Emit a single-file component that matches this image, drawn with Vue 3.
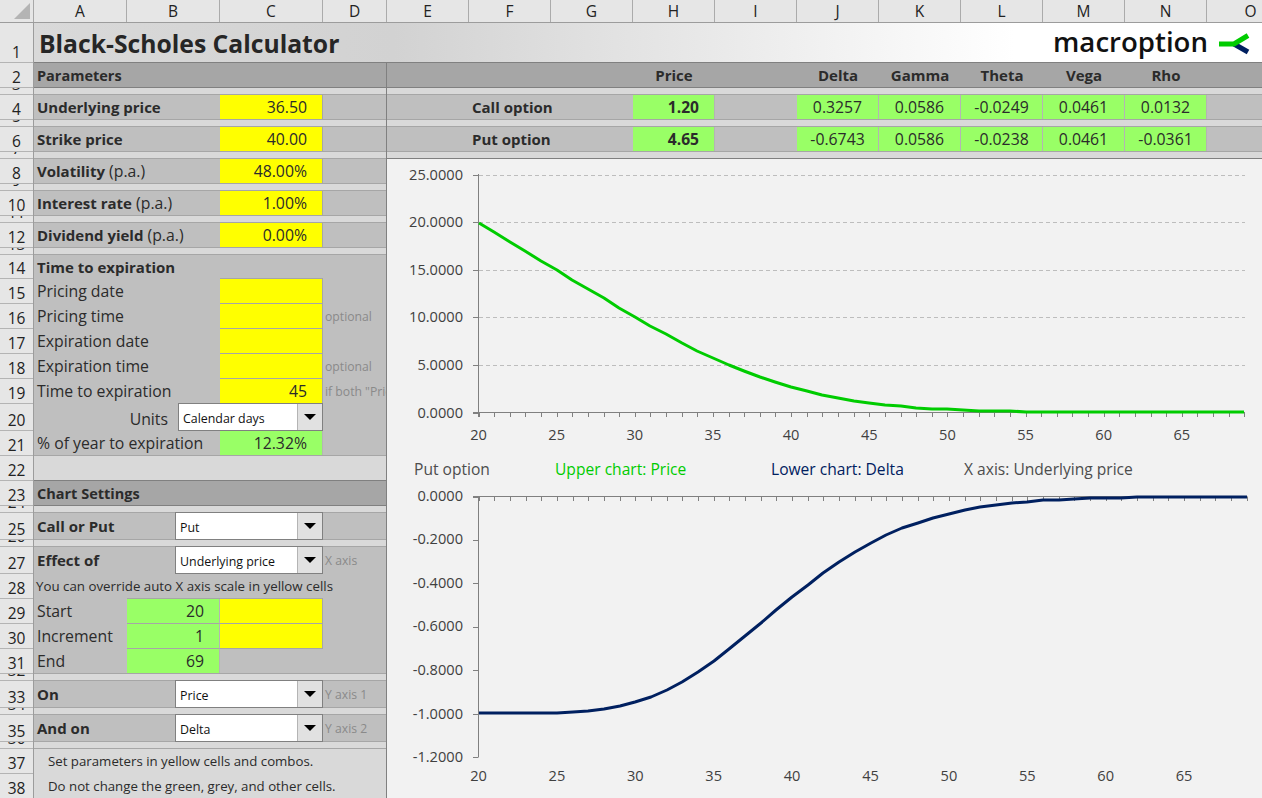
<script setup>
import { computed } from 'vue'

const columns = [
  ['A', 93], ['B', 93], ['C', 103], ['D', 64], ['E', 82], ['F', 82], ['G', 82], ['H', 82],
  ['I', 82], ['J', 82], ['K', 82], ['L', 82], ['M', 82], ['N', 82], ['O', 88]
]
const rowHeights = [40, 25, 7, 25, 7, 25, 7, 25, 7, 25, 7, 25, 7, 24, 25, 25, 25, 25, 25, 27, 25, 25, 25, 7, 27, 7, 27, 25, 25, 25, 25, 7, 27, 7, 27, 7, 25, 25]
const rowHeads = rowHeights.map((h, i) => ({ n: i + 1, h }))

const greeks = {
  call: ['0.3257', '0.0586', '-0.0249', '0.0461', '0.0132'],
  put: ['-0.6743', '0.0586', '-0.0238', '0.0461', '-0.0361']
}
const greekNames = ['Delta', 'Gamma', 'Theta', 'Vega', 'Rho']

function cdf(x) {
  const t = 1 / (1 + 0.2316419 * Math.abs(x))
  const d = 0.3989423 * Math.exp(-x * x / 2)
  const p = d * t * (0.3193815 + t * (-0.3565638 + t * (1.781478 + t * (-1.821256 + t * 1.330274))))
  return x > 0 ? 1 - p : p
}
const K = 40, v = 0.48, r = 0.01, T = 45 / 365
const spots = Array.from({ length: 50 }, (_, i) => 20 + i)
const d1 = (S) => (Math.log(S / K) + (r + v * v / 2) * T) / (v * Math.sqrt(T))
const putPrice = (S) => {
  const a = d1(S)
  const b = a - v * Math.sqrt(T)
  return K * Math.exp(-r * T) * cdf(-b) - S * cdf(-a)
}
const putDelta = (S) => cdf(d1(S)) - 1

const upX = (i) => 478.5 + i * 15.63
const lowX = (i) => 478.5 + i * 15.68
const upY = (p) => 412.5 - p * 9.52
const lowY = (d) => 496.5 - d * 217
const lowLabelY = (d) => 495.5 - d * 218 + 5

const upperLine = computed(() => spots.map((S, i) => `${Math.round(upX(i))},${Math.round(upY(putPrice(S)))}`).join(' '))
const lowerLine = computed(() => spots.map((S, i) => `${Math.round(lowX(i))},${Math.round(lowY(putDelta(S)))}`).join(' '))

const upperTicks = spots.map((_, i) => Math.round(upX(i)) + 0.5)
const lowerTicks = spots.map((_, i) => Math.round(lowX(i)) + 0.5)
const labelled = [0, 5, 10, 15, 20, 25, 30, 35, 40, 45]
const upperY = [25, 20, 15, 10, 5, 0]
const lowerY = [0, -0.2, -0.4, -0.6, -0.8, -1, -1.2]
</script>

<template>
  <div class="sheet">
    <div class="colhead">
      <div class="corner">
        <svg width="33" height="22" viewBox="0 0 33 22"><polygon points="30,3 30,19 14,19" fill="#b4b4b4" /></svg>
      </div>
      <div v-for="c in columns" :key="c[0]" class="colcell" :style="{ width: c[1] + 'px' }">{{ c[0] }}</div>
    </div>

    <div class="main">
      <div class="rowheads">
        <div v-for="h in rowHeads" :key="h.n" class="rowcell" :class="{ tiny: h.h < 10 }" :style="{ height: h.h + 'px' }">
          <span>{{ h.n }}</span>
        </div>
      </div>

      <div class="content">
        <div class="titlebar">
          <h1 class="title">Black-Scholes Calculator</h1>
          <div class="logo">
            <span class="logotext">macroption</span>
            <svg class="logomark" width="32" height="24" viewBox="0 0 32 24">
              <path d="M15 11 L29 19" stroke="#002060" stroke-width="5" fill="none" />
              <path d="M0 11 H15 L29 2.5" stroke="#00cc00" stroke-width="5" fill="none" />
            </svg>
          </div>
        </div>

        <div class="panes">
          <section class="leftpane">
            <div class="r h25 dark"><div class="c lbl b span4 head">Parameters</div></div>
            <div class="r h7 light"></div>
            <div class="r h25 grey"><div class="c lbl b span2">Underlying price</div><div class="c num yellow">36.50</div></div>
            <div class="r h7 light"></div>
            <div class="r h25 grey"><div class="c lbl b span2">Strike price</div><div class="c num yellow">40.00</div></div>
            <div class="r h7 light"></div>
            <div class="r h25 grey"><div class="c lbl span2"><b>Volatility</b>&nbsp;(p.a.)</div><div class="c num yellow">48.00%</div></div>
            <div class="r h7 light"></div>
            <div class="r h25 grey"><div class="c lbl span2"><b>Interest rate</b>&nbsp;(p.a.)</div><div class="c num yellow">1.00%</div></div>
            <div class="r h7 light"></div>
            <div class="r h25 grey"><div class="c lbl span2"><b>Dividend yield</b>&nbsp;(p.a.)</div><div class="c num yellow">0.00%</div></div>
            <div class="r h7 light"></div>

            <div class="r h24 grey free"><div class="c lbl b span2">Time to expiration</div><div class="c ruled"></div></div>
            <div class="r h25 grey free"><div class="c lbl span2">Pricing date</div><div class="c num yellow boxed"></div></div>
            <div class="r h25 grey free"><div class="c lbl span2">Pricing time</div><div class="c num yellow boxed"></div><div class="c note">optional</div></div>
            <div class="r h25 grey free"><div class="c lbl span2">Expiration date</div><div class="c num yellow boxed"></div></div>
            <div class="r h25 grey free"><div class="c lbl span2">Expiration time</div><div class="c num yellow boxed"></div><div class="c note">optional</div></div>
            <div class="r h25 grey free"><div class="c lbl span2">Time to expiration</div><div class="c num yellow boxed">45</div><div class="c note">if both "Pricing date" and</div></div>
            <div class="r h27 grey free units">
              <div class="c lbl endalign">Units</div>
              <div class="combo"><span class="combotext">Calendar days</span><span class="combobtn"><i></i></span></div>
            </div>
            <div class="r h25 grey reg"><div class="c lbl span2">% of year to expiration</div><div class="c num green">12.32%</div></div>
            <div class="r h25 light strong"></div>
            <div class="r h25 dark"><div class="c lbl b span4 head">Chart Settings</div></div>
            <div class="r h7 light"></div>

            <div class="r h27 grey comborow">
              <div class="c lbl b">Call or Put</div>
              <div class="combo"><span class="combotext">Put</span><span class="combobtn"><i></i></span></div>
            </div>
            <div class="r h7 light"></div>
            <div class="r h27 grey free comborow">
              <div class="c lbl b">Effect of</div>
              <div class="combo"><span class="combotext">Underlying price</span><span class="combobtn"><i></i></span></div>
              <div class="c note">X axis</div>
            </div>
            <div class="r h25 grey free"><div class="c override span4">You can override auto X axis scale in yellow cells</div></div>
            <div class="r h25 grey free"><div class="c lbl">Start</div><div class="c num green boxed topline">20</div><div class="c num yellow boxed topline"></div></div>
            <div class="r h25 grey free"><div class="c lbl">Increment</div><div class="c num green boxed">1</div><div class="c num yellow boxed"></div></div>
            <div class="r h25 grey reg"><div class="c lbl">End</div><div class="c num green">69</div></div>
            <div class="r h7 light"></div>
            <div class="r h27 grey comborow">
              <div class="c lbl b">On</div>
              <div class="combo"><span class="combotext">Price</span><span class="combobtn"><i></i></span></div>
              <div class="c note">Y axis 1</div>
            </div>
            <div class="r h7 light"></div>
            <div class="r h27 grey comborow">
              <div class="c lbl b">And on</div>
              <div class="combo"><span class="combotext">Delta</span><span class="combobtn"><i></i></span></div>
              <div class="c note">Y axis 2</div>
            </div>
            <div class="r h7 light"></div>
            <div class="r h25 light free"><div class="c hint span4">Set parameters in yellow cells and combos.</div></div>
            <div class="r h25 light free"><div class="c hint span4">Do not change the green, grey, and other cells.</div></div>
          </section>

          <section class="rightpane">
            <div class="q h25 dark strong">
              <div class="c span3"></div>
              <div class="c ctr b">Price</div>
              <div class="c"></div>
              <div v-for="g in greekNames" :key="g" class="c ctr b">{{ g }}</div>
              <div class="c"></div>
            </div>
            <div class="q h7 light"></div>
            <div class="q h25 grey">
              <div class="c"></div>
              <div class="c opt b span2">Call option</div>
              <div class="c num green b">1.20</div>
              <div class="c"></div>
              <div v-for="(g, i) in greeks.call" :key="i" class="c ctr green val">{{ g }}</div>
              <div class="c"></div>
            </div>
            <div class="q h7 light"></div>
            <div class="q h25 grey">
              <div class="c"></div>
              <div class="c opt b span2">Put option</div>
              <div class="c num green b">4.65</div>
              <div class="c"></div>
              <div v-for="(g, i) in greeks.put" :key="i" class="c ctr green val">{{ g }}</div>
              <div class="c"></div>
            </div>
            <div class="q h7 light strong"></div>

            <svg class="charts" width="875" height="639" viewBox="387 159 875 639">
              <g class="grid">
                <line v-for="p in upperY.slice(0, 5)" :key="p" x1="479" :y1="Math.round(upY(p)) + 0.5" x2="1245" :y2="Math.round(upY(p)) + 0.5" />
              </g>
              <g class="axis">
                <line x1="478.5" y1="174" x2="478.5" y2="417" />
                <line x1="473" y1="412.5" x2="1245" y2="412.5" />
                <line v-for="(x, i) in upperTicks" :key="'u' + i" :x1="x" y1="412.5" :x2="x" y2="417" />
                <line v-for="p in upperY" :key="'uy' + p" x1="473" :y1="Math.round(upY(p)) + 0.5" x2="478.5" :y2="Math.round(upY(p)) + 0.5" />
              </g>
              <polyline class="priceline" :points="upperLine" />
              <text v-for="p in upperY" :key="'ul' + p" class="tick" x="463" :y="upY(p) + 5" text-anchor="end">{{ p.toFixed(4) }}</text>
              <text v-for="i in labelled" :key="'ux' + i" class="tick" :x="upX(i)" y="440" text-anchor="middle">{{ 20 + i }}</text>

              <text class="legend plain" x="414" y="475">Put option</text>
              <text class="legend lime" x="555" y="475">Upper chart: Price</text>
              <text class="legend navy" x="771" y="475">Lower chart: Delta</text>
              <text class="legend plain" x="964" y="475">X axis: Underlying price</text>

              <g class="axis">
                <line x1="478.5" y1="496.5" x2="478.5" y2="757" />
                <line x1="473" y1="496.5" x2="1247" y2="496.5" />
                <line v-for="(x, i) in lowerTicks" :key="'l' + i" :x1="x" y1="496.5" :x2="x" y2="501" />
                <line v-for="d in lowerY" :key="'ly' + d" x1="473" :y1="Math.round(lowY(d)) + 0.5" x2="478.5" :y2="Math.round(lowY(d)) + 0.5" />
              </g>
              <polyline class="deltaline" :points="lowerLine" />
              <text v-for="d in lowerY" :key="'ll' + d" class="tick" x="463" :y="lowLabelY(d)" text-anchor="end">{{ d.toFixed(4) }}</text>
              <text v-for="i in labelled" :key="'lx' + i" class="tick" :x="lowX(i)" y="781" text-anchor="middle">{{ 20 + i }}</text>
            </svg>
          </section>
        </div>
      </div>
    </div>
  </div>
</template>

<style>
html, body { margin: 0; padding: 0; overflow: hidden; background: #f2f2f2; }
</style>

<style scoped>
.sheet {
  width: 1262px;
  height: 798px;
  overflow: hidden;
  font-family: "Open Sans", "Liberation Sans", sans-serif;
  font-size: 15px;
  color: #2b2b2b;
  background: #f2f2f2;
}
.colhead { display: flex; height: 23px; box-sizing: border-box; background: #e6e6e6; border-bottom: 1px solid #9c9c9c; }
.corner { width: 34px; flex: none; box-sizing: border-box; border-right: 1px solid #a8a8a8; height: 22px; }
.corner svg { display: block; }
.colcell {
  flex: none;
  box-sizing: border-box;
  border-right: 1px solid #ababab;
  height: 22px;
  line-height: 22px;
  text-align: center;
  font-size: 15.5px;
  color: #222;
}
.main { display: flex; height: 775px; }
.rowheads { width: 34px; flex: none; box-sizing: border-box; border-right: 1px solid #9c9c9c; background: #e6e6e6; }
.rowcell {
  box-sizing: border-box;
  display: flex;
  align-items: flex-end;
  justify-content: center;
  overflow: hidden;
  border-bottom: 1px solid #b4b4b4;
  font-size: 15.5px;
  color: #222;
  line-height: 20px;
}
.rowcell.tiny { align-items: flex-start; }
.rowcell.tiny span { margin-top: -14px; }
.content { width: 1228px; flex: none; }
.titlebar {
  height: 40px;
  box-sizing: border-box;
  border-bottom: 1px solid #808080;
  display: flex;
  align-items: center;
  justify-content: space-between;
  padding: 0 11px 0 5px;
  background: linear-gradient(90deg, #d9d9d9 0, #d2d2d2 360px, #f4f4f4 830px, #ffffff 980px);
}
.title { margin: 2px 0 0; font-size: 24.7px; font-weight: 700; color: #262626; line-height: 37px; }
.logo { display: flex; align-items: center; gap: 11px; }
.logotext { font-size: 27.6px; font-weight: 600; color: #111; line-height: 34px; margin-bottom: 3px; }
.logomark { display: block; margin-top: 4px; }
.panes { display: flex; }
.leftpane { width: 353px; flex: none; box-sizing: border-box; border-right: 1px solid #808080; height: 735px; }
.rightpane { width: 875px; flex: none; }
.r { display: grid; grid-template-columns: 93px 93px 103px 63px; box-sizing: border-box; }
.q { display: grid; grid-template-columns: repeat(10, 82px) 55px; box-sizing: border-box; }
.h7 { height: 7px; }
.h24 { height: 24px; }
.h25 { height: 25px; }
.h27 { height: 27px; }
.grey { background: #bfbfbf; border-bottom: 1px solid #a6a6a6; }
.light { background: #d9d9d9; border-bottom: 1px solid #a6a6a6; }
.dark { background: #a6a6a6; border-bottom: 1px solid #808080; }
.strong { border-bottom-color: #808080; }
.free { border-bottom: 0; }
.c { display: flex; align-items: center; overflow: hidden; white-space: nowrap; min-width: 0; box-sizing: border-box; }
.span2 { grid-column: span 2; }
.span3 { grid-column: span 3; }
.span4 { grid-column: span 4; }
.lbl { padding-left: 3px; font-size: 15.8px; }
.lbl b, .lbl.b { font-size: 15px; }
.lbl.head { font-size: 14.5px; }
.b { font-weight: 700; }
.free .lbl:not(.b) { padding-bottom: 2px; }
.comborow .lbl { padding-bottom: 2px; }
.r.units .lbl.endalign { justify-content: flex-end; padding: 2px 10px 0 0; }
.num { justify-content: flex-end; padding-right: 15px; font-size: 15.8px; }
.free .num, .reg .num { padding-bottom: 1px; }
.num.b { font-size: 15.6px; }
.ctr { justify-content: center; }
.val { font-size: 15.8px; }
.opt { padding-left: 3px; }
.yellow { background: #ffff00; border-right: 1px solid #a6a6a6; }
.boxed { border-bottom: 1px solid #a6a6a6; }
.topline { box-shadow: 0 -1px 0 #a6a6a6; }
.ruled { border-bottom: 1px solid #a6a6a6; grid-column: 3; }
.green { background: #99ff66; border-right: 1px solid #b4b4b4; }
.note { font-size: 12.2px; color: #8a8a8a; padding-left: 2px; }
.override { padding: 0 0 2px 2px; font-size: 13.3px; }
.hint { padding: 0 0 2px 14px; font-size: 13.25px; }
.comborow { grid-template-columns: 141px 148px 63px; }
.units { grid-template-columns: 144px 145px 63px; }
.combo {
  box-sizing: border-box;
  height: 28px;
  margin-top: -1px;
  display: flex;
  background: #fff;
  border: 1px solid #808080;
  font-size: 12.4px;
  color: #111;
}
.combotext { flex: 1; line-height: 29px; padding-left: 4px; white-space: nowrap; overflow: hidden; }
.combobtn {
  width: 25px;
  flex: none;
  box-sizing: border-box;
  background: #e1e1e1;
  border-left: 1px solid #b4b4b4;
  display: flex;
  align-items: center;
  justify-content: center;
}
.combobtn i {
  display: block;
  width: 0;
  height: 0;
  border-left: 6px solid transparent;
  border-right: 6px solid transparent;
  border-top: 6px solid #000;
}
.charts { display: block; background: #f2f2f2; }
.grid line { stroke: #bdbdbd; stroke-width: 1; stroke-dasharray: 4 3; }
.axis line { stroke: #808080; stroke-width: 1; }
.priceline { fill: none; stroke: #00cc00; stroke-width: 3; stroke-linejoin: round; }
.deltaline { fill: none; stroke: #002060; stroke-width: 3; stroke-linejoin: round; }
.tick { font-size: 14.6px; fill: #404040; }
.legend { font-size: 15.6px; }
.plain { fill: #4d4d4d; }
.lime { fill: #00cc00; }
.navy { fill: #002060; }
</style>
